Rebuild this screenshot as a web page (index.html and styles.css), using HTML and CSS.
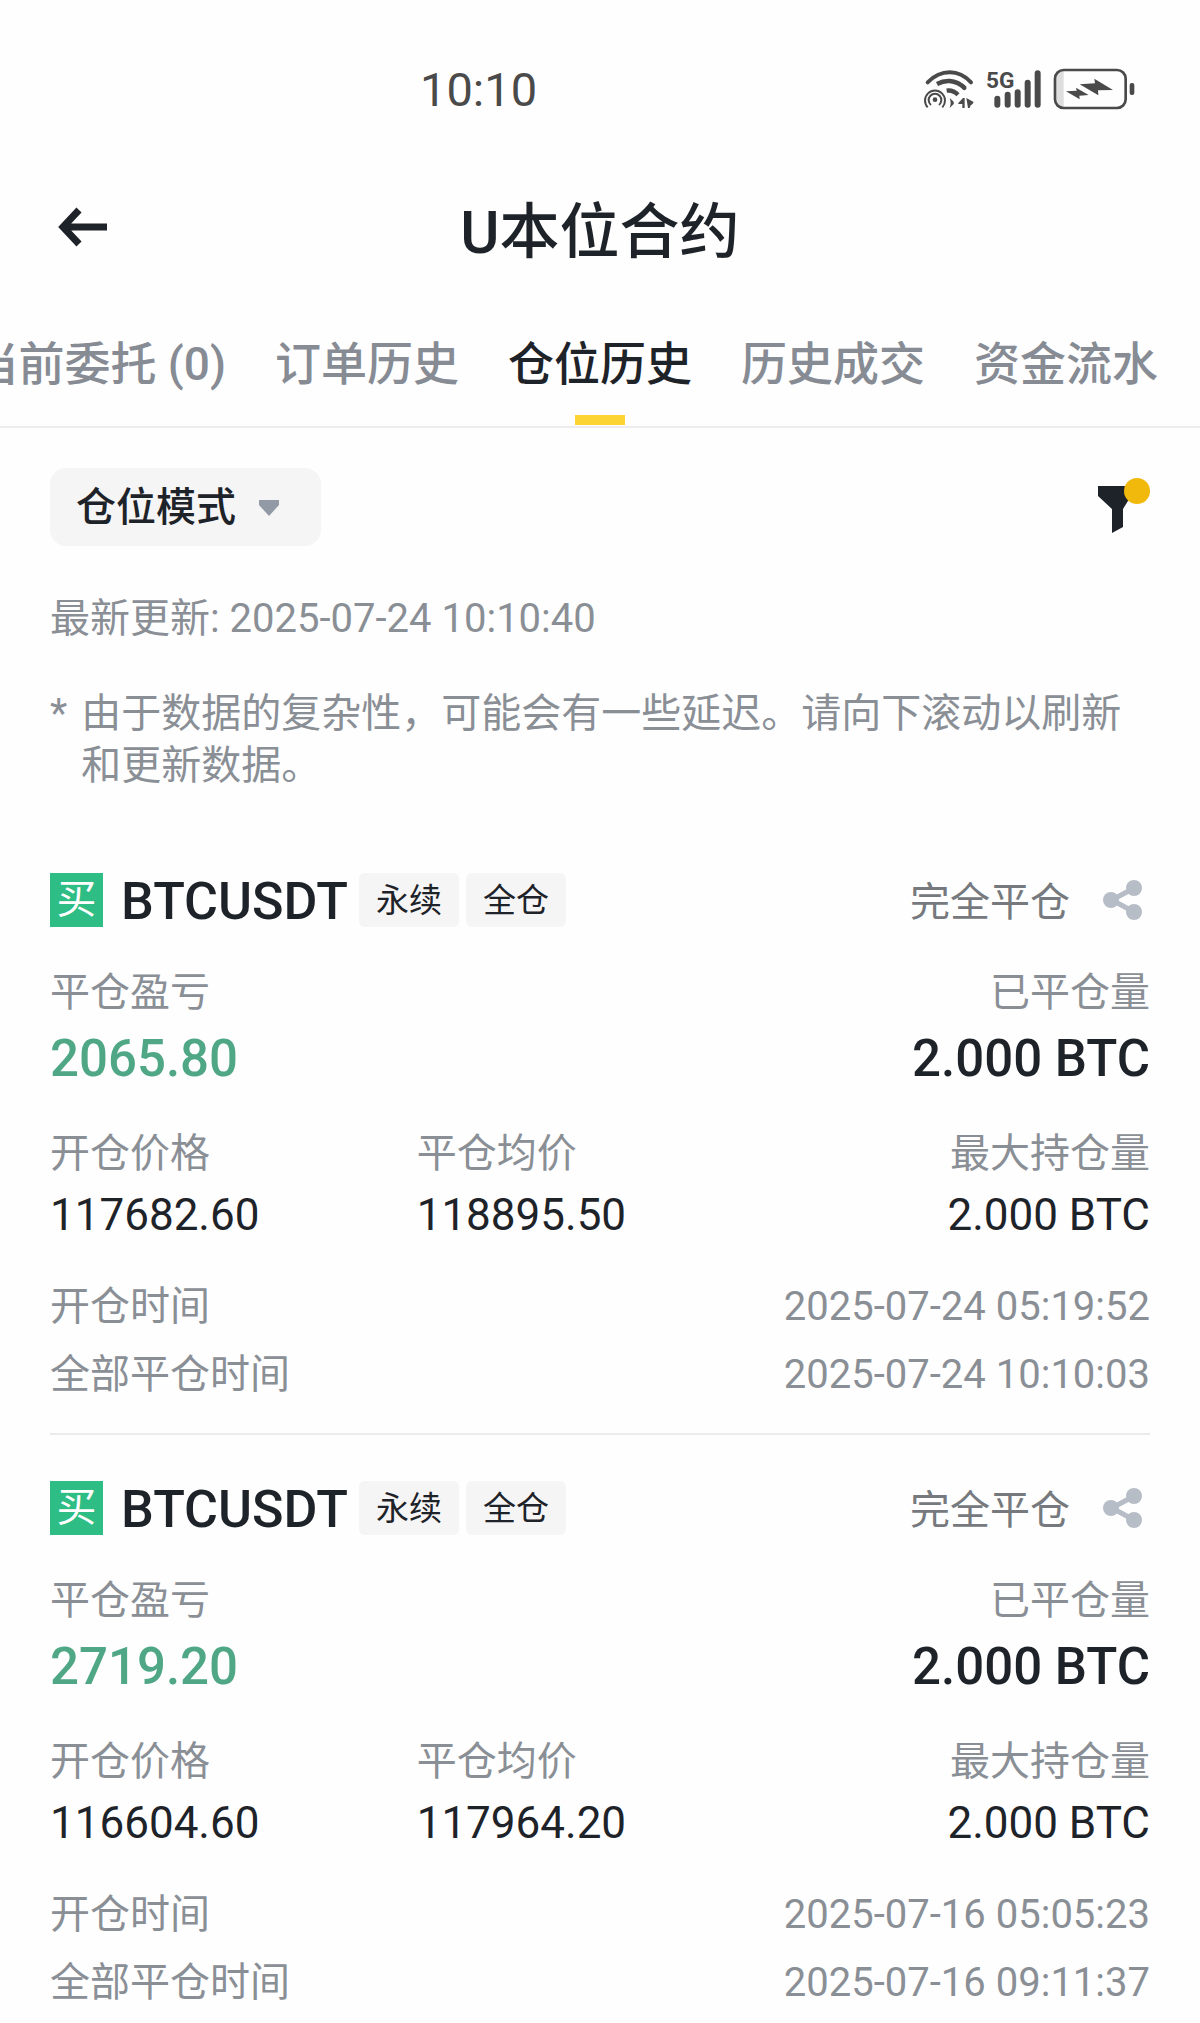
FILE: index.html
```html
<!DOCTYPE html>
<html lang="zh-CN">
<head>
<meta charset="utf-8">
<meta name="viewport" content="width=device-width, initial-scale=1">
<title>U本位合约</title>
<link rel="stylesheet" href="styles.css">
</head>
<body>
<svg class="sprite" aria-hidden="true">
  <symbol id="share" viewBox="0 0 40 42">
    <path d="M31 9 9 21l22 12" fill="none" stroke="currentColor" stroke-width="5"/>
    <circle cx="8" cy="21" r="8" fill="currentColor"/>
    <circle cx="31" cy="9" r="8" fill="currentColor"/>
    <circle cx="31" cy="33" r="8" fill="currentColor"/>
  </symbol>
</svg>

<div class="statusbar">
  <time class="clock">10:10</time>
  <div class="status-icons">
    <svg class="wifi" viewBox="66 54 156 120" role="img" aria-label="Wi-Fi">
      <g fill="none" stroke="currentColor">
        <path d="M80 94Q110 64 146 64T210 94" stroke-width="12" stroke-linecap="round"/>
        <path d="M108 99Q126 89 146 90Q172 92 192 112" stroke-width="13"/>
        <path d="M188 109l2 2" stroke-width="13" stroke-linecap="round"/>
        <path d="M137 119Q156 116 171 131" stroke-width="13"/>
        <path d="M80 169A30 30 0 1 1 124 169" stroke-width="6"/>
        <path d="M90 162A19 19 0 1 1 114 162" stroke-width="6"/>
      </g>
      <circle cx="102" cy="146" r="7" fill="currentColor"/>
      <path d="M146 141q16 12 12 18l-12 12q6-16 0-30zM172 156l14-15h5v30h-7v-12h-12zM196 141l22 12-4 7-5 3-3 8h-5z" fill="currentColor"/>
    </svg>
    <svg class="signal" viewBox="256 54 168 120" role="img" aria-label="5G">
      <text class="network" x="256" y="112">5G</text>
      <path d="M290 143v18M321 131v30M351 124v37M381 95v66M411 67v94" fill="none" stroke="currentColor" stroke-width="18" stroke-linecap="round"/>
    </svg>
    <svg class="battery" viewBox="460 51 246 126" role="img" aria-label="充电中">
      <path d="M492 60v108q-22-2-22-24V84q0-22 22-24z" fill="#dedede"/>
      <rect x="466" y="57" width="212" height="114" rx="26" fill="none" stroke="currentColor" stroke-width="8"/>
      <rect x="690" y="96" width="14" height="36" rx="6" fill="currentColor"/>
      <path d="M540 100l46-3-2-14 56 34-45 1 1 15zM499 121l32-2-2-9 38 22-28 2 1 11z" fill="currentColor"/>
    </svg>
  </div>
</div>

<header class="header">
  <button class="back" type="button" aria-label="返回">
    <svg viewBox="0 0 50 40"><path d="M49 20H7M21 3 5 20l16 17" fill="none" stroke="currentColor" stroke-width="7"/></svg>
  </button>
  <h1 class="title">U本位合约</h1>
</header>

<nav class="tabs">
  <a class="tab" href="#orders">当前委托 (0)</a>
  <a class="tab" href="#order-history">订单历史</a>
  <a class="tab tab-active" href="#position-history" aria-current="page">仓位历史</a>
  <a class="tab" href="#trades">历史成交</a>
  <a class="tab" href="#funds">资金流水</a>
</nav>

<main class="content">
  <div class="toolbar">
    <div class="mode">
      <select class="mode-select" aria-label="仓位模式"><option>仓位模式</option></select>
      <svg class="caret" viewBox="0 0 22 17" aria-hidden="true"><path d="M1 1h20v5L11 17 1 6z" fill="currentColor"/></svg>
    </div>
    <button class="filter" type="button" aria-label="筛选">
      <svg viewBox="0 0 52 56"><path d="M0 9h33v10L25 32v18l-11 6V32L0 19z" fill="#1e2329"/><circle cx="39" cy="14" r="13" fill="#f0b90b"/></svg>
    </button>
  </div>

  <p class="updated">最新更新: 2025-07-24 10:10:40</p>
  <p class="note"><span>*</span><span>由于数据的复杂性，可能会有一些延迟。请向下滚动以刷新和更新数据。</span></p>

  <article class="position">
    <div class="position-head">
      <span class="side">买</span>
      <h2 class="symbol">BTCUSDT</h2>
      <span class="tag">永续</span>
      <span class="tag">全仓</span>
      <span class="state">完全平仓</span>
      <button class="share" type="button" aria-label="分享"><svg><use href="#share"/></svg></button>
    </div>
    <dl class="summary">
      <div><dt>平仓盈亏</dt><dd class="profit">2065.80</dd></div>
      <div class="end"><dt>已平仓量</dt><dd>2.000 BTC</dd></div>
    </dl>
    <dl class="prices">
      <div><dt>开仓价格</dt><dd>117682.60</dd></div>
      <div><dt>平仓均价</dt><dd>118895.50</dd></div>
      <div class="end"><dt>最大持仓量</dt><dd>2.000 BTC</dd></div>
    </dl>
    <dl class="times">
      <div><dt>开仓时间</dt><dd>2025-07-24 05:19:52</dd></div>
      <div><dt>全部平仓时间</dt><dd>2025-07-24 10:10:03</dd></div>
    </dl>
  </article>

  <article class="position">
    <div class="position-head">
      <span class="side">买</span>
      <h2 class="symbol">BTCUSDT</h2>
      <span class="tag">永续</span>
      <span class="tag">全仓</span>
      <span class="state">完全平仓</span>
      <button class="share" type="button" aria-label="分享"><svg><use href="#share"/></svg></button>
    </div>
    <dl class="summary">
      <div><dt>平仓盈亏</dt><dd class="profit">2719.20</dd></div>
      <div class="end"><dt>已平仓量</dt><dd>2.000 BTC</dd></div>
    </dl>
    <dl class="prices">
      <div><dt>开仓价格</dt><dd>116604.60</dd></div>
      <div><dt>平仓均价</dt><dd>117964.20</dd></div>
      <div class="end"><dt>最大持仓量</dt><dd>2.000 BTC</dd></div>
    </dl>
    <dl class="times">
      <div><dt>开仓时间</dt><dd>2025-07-16 05:05:23</dd></div>
      <div><dt>全部平仓时间</dt><dd>2025-07-16 09:11:37</dd></div>
    </dl>
  </article>
</main>
</body>
</html>
```

FILE: styles.css
```css
* {
  box-sizing: border-box;
}

body {
  margin: 0;
  background: #fefefe;
  color: #1e2329;
  font-family: Roboto, "Noto Sans CJK SC", sans-serif;
  font-size: 40px;
  line-height: 48px;
}

h1, h2, p, dl, dd {
  margin: 0;
}

button {
  padding: 0;
  border: 0;
  background: none;
  color: inherit;
}

svg {
  display: block;
}

.sprite {
  display: none;
}

/* Phone status bar */
.statusbar {
  display: flex;
  align-items: center;
  justify-content: space-between;
  padding: 60px 65px 20px 420px;
  color: #4a4a4a;
}

.clock {
  padding-top: 2px;
  font-size: 47px;
  line-height: 56px;
}

.status-icons {
  display: flex;
  align-items: center;
  gap: 11px;
}

.wifi {
  width: 52px;
  height: 40px;
}

.signal {
  width: 56px;
  height: 40px;
  overflow: visible;
}

.network {
  fill: currentColor;
  font-size: 68px;
  font-weight: 700;
}

.battery {
  width: 82px;
  height: 42px;
}

/* Page header */
.header {
  display: grid;
  grid-template-columns: 50px 1fr 50px;
  align-items: start;
  padding: 55px 58px 0;
}

.back {
  padding-top: 14px;
}

.back svg {
  width: 50px;
  height: 40px;
}

.title {
  font-size: 60px;
  font-weight: 500;
  line-height: 80px;
  text-align: center;
}

.tabs {
  display: flex;
  justify-content: flex-end;
  gap: 49px;
  padding: 61px 42px 0;
  border-bottom: 2px solid #ededee;
  overflow: hidden;
}

.tab {
  flex: none;
  display: flex;
  flex-direction: column;
  align-items: center;
  gap: 21px;
  padding-bottom: 1px;
  color: #868b94;
  font-size: 46px;
  font-weight: 500;
  line-height: 60px;
  text-decoration: none;
  white-space: nowrap;
}

.tab::after {
  content: "";
  width: 50px;
  height: 10px;
}

.tab-active {
  color: #1e2329;
}

.tab-active::after {
  background: #fcd535;
}

.content {
  padding: 40px 50px 16px;
}

.toolbar {
  display: flex;
  align-items: flex-start;
  justify-content: space-between;
}

.mode {
  display: flex;
  align-items: center;
  gap: 22px;
  padding: 0 41px 0 26px;
  border-radius: 16px;
  background: #f5f5f5;
  color: #929aa5;
}

.mode-select {
  height: 78px;
  padding: 2px 0 0;
  border: 0;
  appearance: none;
  background: none;
  color: #1e2329;
  font: inherit;
  font-weight: 500;
}

.caret {
  width: 22px;
  height: 17px;
}

.filter {
  padding-top: 9px;
}

.filter svg {
  width: 52px;
  height: 56px;
}

.updated {
  margin-top: 47px;
  color: #8a8f96;
  line-height: 52px;
}

.note {
  display: flex;
  gap: 14px;
  margin-top: 43px;
  padding-right: 26px;
  color: #8a8f96;
  line-height: 52px;
}

/* Position records */
.position {
  padding-top: 46px;
}

.note + .position {
  padding-top: 81px;
}

.position + .position {
  margin-top: 34px;
  border-top: 2px solid #ebebec;
}

.position-head {
  display: flex;
  align-items: center;
  height: 54px;
}

.side {
  width: 53px;
  background: #2ebd85;
  color: #fff;
  line-height: 54px;
  text-align: center;
}

.symbol {
  margin: 0 11px 0 18px;
  padding-top: 3px;
  font-size: 52px;
  font-weight: 500;
}

.tag {
  margin-right: 7px;
  padding: 2px 17px 0;
  border-radius: 6px;
  background: #f5f5f5;
  font-size: 33px;
  line-height: 52px;
}

.state {
  margin-left: auto;
  padding-top: 5px;
  color: #76797d;
}

.share {
  margin: 0 7px 0 33px;
  color: #b7bdc6;
}

.share svg {
  width: 40px;
  height: 42px;
}

dt {
  color: #8a8f96;
}

.end {
  text-align: right;
}

.summary {
  display: flex;
  justify-content: space-between;
  margin-top: 42px;
}

.summary dd {
  margin-top: 12px;
  font-size: 51px;
  font-weight: 500;
  line-height: 60px;
}

.summary .profit {
  color: #4fa786;
}

.prices {
  display: grid;
  grid-template-columns: repeat(3, 1fr);
  margin-top: 41px;
}

.prices dd {
  margin-top: 12px;
  font-size: 44px;
  line-height: 50px;
}

.times {
  display: grid;
  gap: 20px;
  margin-top: 43px;
}

.times div {
  display: flex;
  justify-content: space-between;
}

.times dd {
  color: #8a8f96;
}
```
